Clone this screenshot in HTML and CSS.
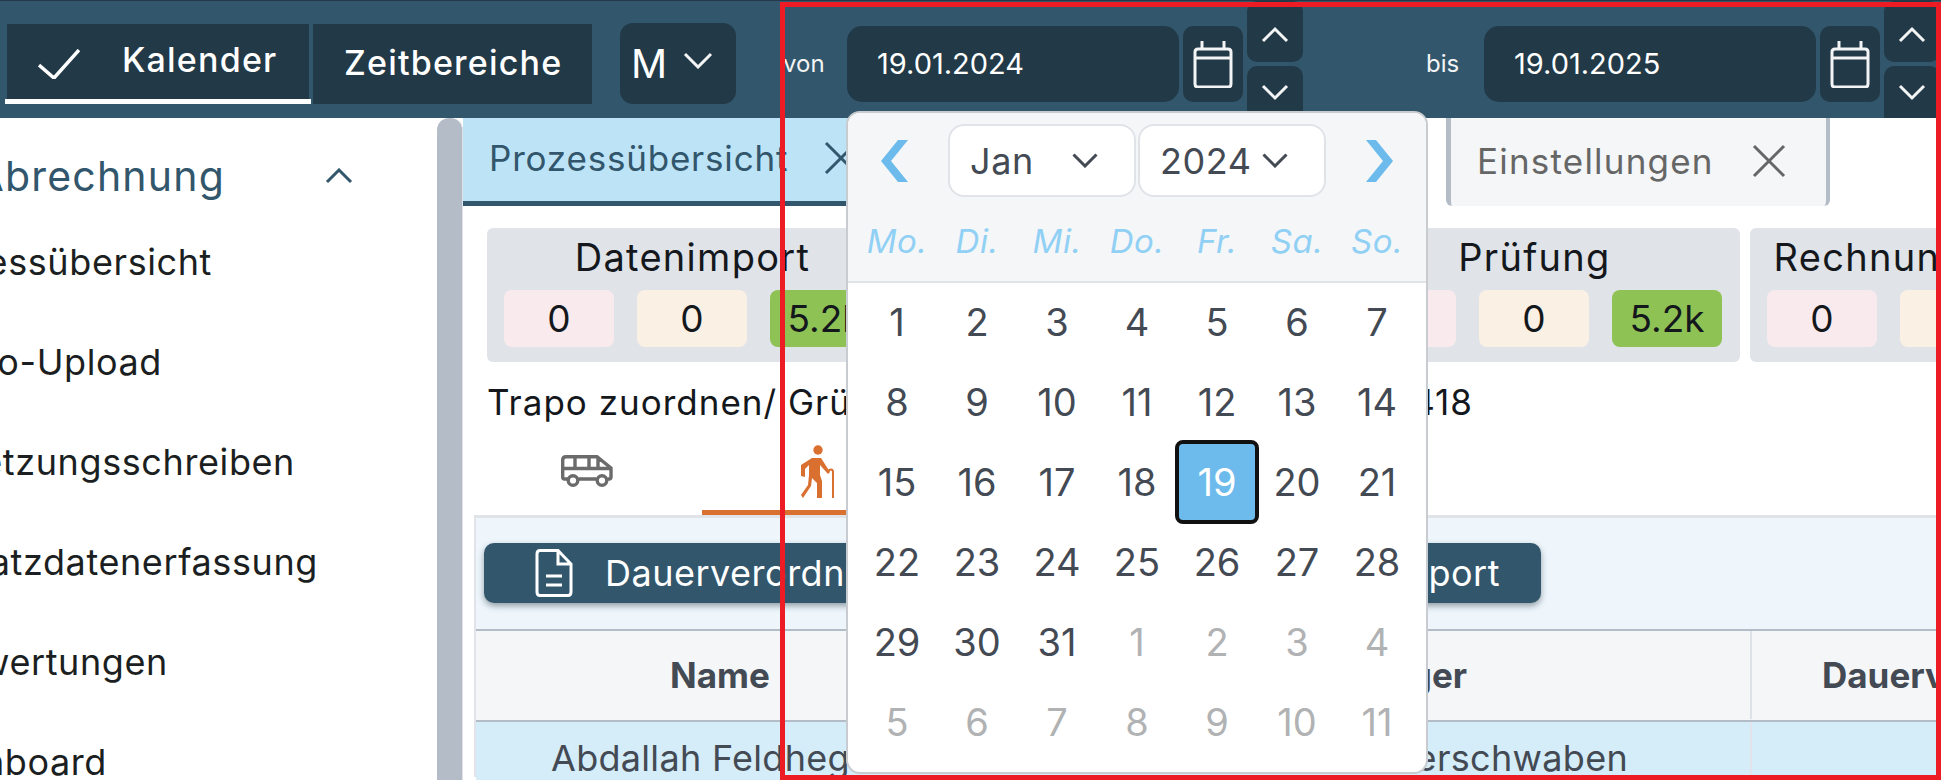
FILE: index.html
```html
<!DOCTYPE html>
<html lang="de">
<head>
  <meta charset="UTF-8" />
  <title>Abrechnung - Prozessübersicht</title>
  <link rel="stylesheet" href="styles.css">
</head>
<body>
  <header class="topbar">
    <div class="mode-tab active">
      <svg class="check" viewBox="0 0 42 30"><path d="M1 16 L16 29 L41 1"/></svg>
      <span>Kalender</span>
    </div>
    <div class="mode-tab second"><span>Zeitbereiche</span></div>
    <div class="period"><span>M</span>
      <svg class="chev-white" viewBox="0 0 30 17"><path d="M2 2 L15 15 L28 2"/></svg>
    </div>

    <span class="range-label von">von</span>
    <div class="date-input">19.01.2024</div>
    <div class="cal-btn">
      <svg viewBox="0 0 42 48"><path d="M3 12 Q3 9 6 9 H36 Q39 9 39 12 V44 Q39 47 36 47 H6 Q3 47 3 44 Z M3 18 H39 M10 1 V9 M32 1 V9"/></svg>
    </div>
    <div class="spin">
      <div class="spin-btn up"><svg viewBox="0 0 28 17"><path d="M2 15 L14 3 L26 15"/></svg></div>
      <div class="spin-btn down"><svg viewBox="0 0 28 17"><path d="M2 2 L14 14 L26 2"/></svg></div>
    </div>

    <span class="range-label bis">bis</span>
    <div class="date-input">19.01.2025</div>
    <div class="cal-btn">
      <svg viewBox="0 0 42 48"><path d="M3 12 Q3 9 6 9 H36 Q39 9 39 12 V44 Q39 47 36 47 H6 Q3 47 3 44 Z M3 18 H39 M10 1 V9 M32 1 V9"/></svg>
    </div>
    <div class="spin">
      <div class="spin-btn up"><svg viewBox="0 0 28 17"><path d="M2 15 L14 3 L26 15"/></svg></div>
      <div class="spin-btn down"><svg viewBox="0 0 28 17"><path d="M2 2 L14 14 L26 2"/></svg></div>
    </div>
  </header>

  <div class="layout">
    <aside class="sidebar">
      <div class="nav-group">
        <span>Abrechnung</span>
      </div>
      <svg class="group-chev" viewBox="0 0 28 16"><path d="M2 14 L14 2 L26 14"/></svg>
      <ul class="nav-list">
        <li class="nav1"><span>Prozessübersicht</span></li>
        <li class="nav2"><span>Trapo-Upload</span></li>
        <li class="nav3"><span>Fortsetzungsschreiben</span></li>
        <li class="nav4"><span>Einsatzdatenerfassung</span></li>
        <li class="nav5"><span>Auswertungen</span></li>
        <li class="nav6"><span>Dashboard</span></li>
      </ul>
    </aside>
    <div class="scrollbar"></div>

    <main class="content">
      <div class="tabs">
        <div class="tab current">
          <span>Prozessübersicht</span>
          <svg class="tab-x" viewBox="0 0 34 34"><path d="M2 2 L32 32 M32 2 L2 32"/></svg>
        </div>
        <div class="tab settings">
          <span>Einstellungen</span>
          <svg class="tab-x" viewBox="0 0 34 34"><path d="M2 2 L32 32 M32 2 L2 32"/></svg>
        </div>
      </div>

      <section class="stats">
        <div class="stat-card">
          <h3>Datenimport</h3>
          <div class="pills"><span class="pill red">0</span><span class="pill beige">0</span><span class="pill green">5.2k</span></div>
        </div>
        <div class="stat-card">
          <h3>Zuordnung</h3>
          <div class="pills"><span class="pill red">0</span><span class="pill beige">0</span><span class="pill green">5.2k</span></div>
        </div>
        <div class="stat-card">
          <h3>Prüfung</h3>
          <div class="pills"><span class="pill red">0</span><span class="pill beige">0</span><span class="pill green">5.2k</span></div>
        </div>
        <div class="stat-card">
          <h3>Rechnungsstellung</h3>
          <div class="pills"><span class="pill red">0</span><span class="pill beige">0</span><span class="pill green">5.2k</span></div>
        </div>
      </section>

      <div class="summary">
        <span>Trapo zuordnen/ Grün</span>
        <span>418</span>
      </div>

      <div class="kind-tabs">
        <div class="kind-tab">
          <svg class="van" viewBox="0 0 52 32">
            <path d="M7 24 H3.500 Q1.700 24 1.700 22 V5 Q1.700 1.700 5 1.700 H36 L50 13 V22 Q50 24 48 24 H46.500 M17.500 24 H35.500 M2 13.500 H49 M14 2 V13.500 M28 2 V13.500 M37 3 V13.500"/>
            <circle cx="12" cy="25.500" r="4.800"/>
            <circle cx="41" cy="25.500" r="4.800"/>
          </svg>
        </div>
        <div class="kind-tab selected">
          <svg class="walker" viewBox="0 0 34 53">
            <circle cx="18" cy="5" r="4.700"/>
            <path class="body" d="M12 13 H21 L30 27 L28 29 L20 20 L20 30 L22 36 V53 H17 V38 L12 33 L11 41 L3 53 L1 50 L8 40 L9 30 V20 L5 24 V32 L1 31 V20 Z"/>
            <path class="cane" d="M28 27 Q29 24.500 31 24.500 Q33 24.500 33 27 V53"/>
          </svg>
        </div>
      </div>

      <section class="panel">
        <div class="toolbar">
          <div class="export-btn">
            <svg viewBox="0 0 38 48"><path d="M5 1.500 H23 L36 15 V43 Q36 46.500 33 46.500 H5 Q2 46.500 2 43 V5 Q2 1.500 5 1.500 Z M23 1.500 V15 H36 M11 27 H27 M11 36 H27"/></svg>
            <div class="export-label"><span>Dauerverordnungen</span><span>Excel-Export</span></div>
          </div>
        </div>
        <div class="table-head">
          <div class="col-name">Name</div>
          <div class="col-owner">Kostenträger</div>
          <div class="col-term">Dauerverordnung</div>
        </div>
        <div class="table-row">
          <div class="col-name">Abdallah Feldhege</div>
          <div class="col-owner">Bezirk Oberschwaben</div>
          <div class="col-term"></div>
        </div>
      </section>
    </main>
  </div>

  <div class="picker">
    <div class="picker-head">
      <div class="month-row">
        <svg class="nav-arrow" viewBox="0 0 27 42"><path d="M27 0 L17 0 L0 21 L17 42 L27 42 L10 21 Z"/></svg>
        <div class="selects">
          <div class="select"><span>Jan</span>
            <svg viewBox="0 0 26 15"><path d="M1.500 1.500 L13 13 L24.500 1.500"/></svg>
          </div>
          <div class="select"><span>2024</span>
            <svg viewBox="0 0 26 15"><path d="M1.500 1.500 L13 13 L24.500 1.500"/></svg>
          </div>
        </div>
        <svg class="nav-arrow" viewBox="0 0 27 42"><path d="M0 0 L10 0 L27 21 L10 42 L0 42 L17 21 Z"/></svg>
      </div>
      <div class="weekdays">
        <span>Mo.</span><span>Di.</span><span>Mi.</span><span>Do.</span><span>Fr.</span><span>Sa.</span><span>So.</span>
      </div>
    </div>
    <div class="days">
      <span>1</span><span>2</span><span>3</span><span>4</span><span>5</span><span>6</span><span>7</span>
      <span>8</span><span>9</span><span>10</span><span>11</span><span>12</span><span>13</span><span>14</span>
      <span>15</span><span>16</span><span>17</span><span>18</span><span class="today">19</span><span>20</span><span>21</span>
      <span>22</span><span>23</span><span>24</span><span>25</span><span>26</span><span>27</span><span>28</span>
      <span>29</span><span>30</span><span>31</span><span class="off">1</span><span class="off">2</span><span class="off">3</span><span class="off">4</span>
      <span class="off">5</span><span class="off">6</span><span class="off">7</span><span class="off">8</span><span class="off">9</span><span class="off">10</span><span class="off">11</span>
    </div>
  </div>

  <div class="frame"></div>
</body>
</html>
```

FILE: styles.css
```css
* {
  box-sizing: border-box;
}
body {
  margin: 0;
  width: 1941px;
  height: 780px;
  overflow: hidden;
  position: relative;
  background: white;
  color: #14181c;
  font-family: Inter, "Open Sans", sans-serif;
}
svg {
  display: block;
  fill: none;
}

/* top bar */
.topbar {
  height: 118px;
  background: #32566b;
  border-top: 1px solid #243a48;
  display: flex;
  align-items: flex-start;
  overflow: hidden;
}
.mode-tab {
  height: 80px;
  margin-top: 23px;
  background: #223947;
  color: white;
  font-size: 34px;
  font-weight: 500;
  letter-spacing: 1.200px;
  display: flex;
  align-items: center;
  position: relative;
}
.mode-tab.active {
  width: 302px;
  margin-left: 7px;
  padding: 0 0 10px 31px;
}
.mode-tab.active::after {
  content: "";
  position: absolute;
  left: -2px;
  right: -2px;
  bottom: 0;
  height: 5px;
  background: white;
}
.mode-tab.second {
  width: 279px;
  margin-left: 4px;
  padding-left: 31px;
  padding-bottom: 4px;
}
.check {
  width: 42px;
  height: 30px;
  margin-right: 42px;
  margin-top: 10px;
}
.check path {
  stroke: white;
  stroke-width: 3.500;
}
.period {
  width: 116px;
  height: 81px;
  margin: 22px 0 0 28px;
  padding: 0 23px 0 11px;
  background: #223947;
  border-radius: 13px;
  color: white;
  font-size: 40px;
  display: flex;
  align-items: center;
  justify-content: space-between;
}
.chev-white {
  width: 30px;
  height: 17px;
  margin-bottom: 6px;
}
.chev-white path, .spin-btn path, .cal-btn path {
  stroke: #f2f4f5;
  stroke-width: 3;
}
.range-label {
  color: #f2f4f5;
  font-size: 24px;
  line-height: 76px;
  margin-top: 25px;
}
.von {
  width: 64px;
  margin-left: 47px;
}
.bis {
  width: 58px;
  margin-left: 123px;
}
.date-input {
  width: 332px;
  height: 76px;
  margin-top: 25px;
  padding: 0 0 0 30px;
  background: #223947;
  border-radius: 15px;
  color: white;
  font-size: 29px;
  line-height: 75px;
}
.cal-btn {
  width: 60px;
  height: 76px;
  margin: 25px 4px 0;
  background: #223947;
  border-radius: 10px;
  padding: 14px 0 0 9px;
}
.cal-btn svg {
  width: 42px;
  height: 48px;
}
.spin {
  width: 56px;
  flex-shrink: 0;
  display: flex;
  flex-direction: column;
  gap: 4px;
}
.spin-btn {
  background: #223947;
  height: 61px;
  border-radius: 10px;
  display: flex;
  justify-content: center;
  padding-top: 25px;
}
.spin-btn.down {
  height: 60px;
  padding-top: 18px;
}
.spin-btn svg {
  width: 28px;
  height: 17px;
}

/* main layout */
.layout {
  display: flex;
  height: 662px;
  overflow: hidden;
}
.sidebar {
  width: 437px;
  flex-shrink: 0;
  position: relative;
  overflow: hidden;
}
.nav-group {
  width: 225px;
  height: 50px;
  margin-top: 33px;
  display: flex;
  justify-content: flex-end;
  color: #32566b;
  font-size: 41px;
  letter-spacing: 1.200px;
  line-height: 50px;
  white-space: nowrap;
}
.group-chev {
  position: absolute;
  left: 325px;
  top: 50px;
  width: 28px;
  height: 16px;
}
.group-chev path {
  stroke: #32566b;
  stroke-width: 3;
}
.nav-list {
  list-style: none;
  margin: 36px 0 0;
  padding: 0;
  font-size: 36px;
  letter-spacing: 0.600px;
  white-space: nowrap;
  color: #1c1f22;
}
.nav-list li {
  height: 100px;
  display: flex;
  justify-content: flex-end;
  line-height: 50px;
}
.nav1 { width: 212px; }
.nav2 { width: 162px; }
.nav3 { width: 295px; }
.nav4 { width: 318px; }
.nav5 { width: 168px; }
.nav6 { width: 107px; }

.scrollbar {
  width: 26px;
  flex-shrink: 0;
  background: #b4bdc7;
  border-radius: 12px 12px 0 0;
  border-right: 1px solid #dfe3e7;
}
.content {
  flex: 1;
  min-width: 0;
  overflow: hidden;
}

/* tabs */
.tabs {
  height: 88px;
  display: flex;
}
.tab {
  display: flex;
  align-items: center;
  font-size: 35px;
  letter-spacing: 0.800px;
  white-space: nowrap;
  padding-bottom: 3px;
}
.tab.current {
  width: 410px;
  background: #bde3f7;
  border-bottom: 5px solid #32566b;
  color: #32566b;
  padding-left: 26px;
}
.tab.current .tab-x {
  margin-left: 36px;
}
.tab-x {
  width: 34px;
  height: 34px;
  flex-shrink: 0;
}
.tab-x path {
  stroke: currentColor;
  stroke-width: 3;
}
.tab.settings {
  width: 384px;
  margin-left: 573px;
  background: #f4f6f8;
  color: #666;
  border-left: 5px solid #b4bdc7;
  border-right: 4px solid #b4bdc7;
  border-radius: 0 0 6px 6px;
  padding-left: 26px;
  letter-spacing: 1.200px;
}
.tab.settings .tab-x {
  margin-left: 38px;
}

/* status cards */
.stats {
  margin: 22px 0 0 24px;
  display: flex;
  gap: 10px;
}
.stat-card {
  width: 411px;
  height: 134px;
  flex-shrink: 0;
  background: #e0e3e8;
  border-radius: 6px;
  padding: 0 17px;
}
.stat-card h3 {
  margin: 0;
  height: 62px;
  font-size: 38px;
  font-weight: 400;
  letter-spacing: 1.300px;
  line-height: 58px;
  text-align: center;
  white-space: nowrap;
}
.pills {
  display: flex;
  gap: 23px;
}
.pill {
  width: 110px;
  height: 57px;
  border-radius: 8px;
  font-size: 37px;
  line-height: 57px;
  text-align: center;
}
.pill.red { background: #f9ebed; }
.pill.beige { background: #faf0e4; }
.pill.green { background: #8fc255; }

.summary {
  width: 986px;
  margin: 17px 0 17px 24px;
  height: 46px;
  font-size: 35px;
  letter-spacing: 1px;
  line-height: 46px;
  display: flex;
  justify-content: space-between;
  white-space: nowrap;
}

/* van and walker tabs */
.kind-tabs {
  height: 73px;
  margin: 0 0 0 9px;
  display: flex;
}
.kind-tab {
  width: 230px;
  display: flex;
  justify-content: center;
}
.kind-tab.selected {
  border-bottom: 5px solid #d9702f;
}
.van {
  width: 52px;
  height: 32px;
  margin-top: 13px;
}
.van path, .van circle {
  stroke: #6b6b6b;
  stroke-width: 3.400;
}
.van circle {
  fill: white;
}
.walker {
  width: 34px;
  height: 53px;
  margin-top: 3px;
}
.walker circle, .walker .body {
  fill: #d9702f;
}
.walker .cane {
  stroke: #d9702f;
  stroke-width: 2;
}

/* table panel */
.panel {
  margin-left: 11px;
  width: 1500px;
  height: 262px;
  background: #eef6fc;
  border-top: 3px solid #e0e3e8;
  border-left: 2px solid #e0e3e8;
}
.toolbar {
  height: 111px;
  padding: 25px 0 0 8px;
}
.export-btn {
  width: 1057px;
  height: 60px;
  background: #32566b;
  border-radius: 10px;
  box-shadow: 0 3px 6px rgba(30, 50, 60, 0.45);
  color: white;
  font-size: 36px;
  letter-spacing: 0.500px;
  display: flex;
  align-items: center;
  padding: 0 41px 0 51px;
  white-space: nowrap;
}
.export-btn svg {
  width: 38px;
  height: 48px;
  margin-right: 32px;
}
.export-btn path {
  stroke: white;
  stroke-width: 3;
}
.export-label {
  flex: 1;
  display: flex;
  justify-content: space-between;
}
.table-head, .table-row {
  display: grid;
  grid-template-columns: 488px 786px 1fr;
  white-space: nowrap;
}
.table-head {
  height: 93px;
  background: #f4f6f8;
  border-top: 2px solid #b4bdc7;
  border-bottom: 2px solid #b4bdc7;
  color: #434a54;
  font-size: 35px;
  font-weight: 700;
  line-height: 88px;
}
.table-head .col-name {
  text-align: center;
}
.table-head .col-owner {
  text-align: right;
  padding-right: 283px;
}
.table-head .col-term {
  padding-left: 70px;
  border-left: 2px solid #dde2e8;
  margin-bottom: 4px;
}
.table-row {
  height: 70px;
  background: #d5ecf9;
  color: #434a54;
  font-size: 36px;
  letter-spacing: 0.300px;
  line-height: 72px;
}
.table-row .col-name {
  padding-left: 75px;
}
.table-row .col-owner {
  text-align: right;
  padding-right: 122px;
}
.table-row .col-term {
  border-left: 2px solid #e3e3ec;
}

/* date picker */
.picker {
  position: absolute;
  left: 846px;
  top: 111px;
  width: 582px;
  height: 663px;
  background: white;
  border: 2px solid #c8cbcf;
  border-radius: 14px;
  overflow: hidden;
}
.picker-head {
  height: 170px;
  background: #f4f6f8;
  border-bottom: 2px solid #e0e3e8;
  padding-top: 11px;
}
.month-row {
  display: flex;
  align-items: center;
  justify-content: center;
  gap: 40px;
}
.nav-arrow {
  width: 27px;
  height: 42px;
  fill: #6dbbec;
}
.selects {
  display: flex;
  gap: 2px;
}
.select {
  width: 188px;
  height: 73px;
  background: white;
  border: 2px solid #e0e3e8;
  border-radius: 16px;
  color: #434a54;
  font-size: 36px;
  letter-spacing: 0.600px;
  display: flex;
  align-items: center;
  justify-content: space-between;
  padding: 0 36px 0 20px;
}
.select svg {
  width: 26px;
  height: 15px;
}
.select path {
  stroke: #434a54;
  stroke-width: 3;
}
.weekdays {
  display: grid;
  grid-template-columns: repeat(7, 80px);
  margin: 24px 0 0 9px;
  color: #90d0f4;
  font-size: 33px;
  letter-spacing: 0.500px;
  font-style: italic;
  text-align: center;
}
.days {
  display: grid;
  grid-template-columns: repeat(7, 80px);
  grid-auto-rows: 80px;
  margin: -1px 0 0 9px;
  color: #434a54;
  font-size: 38px;
  text-align: center;
}
.days span {
  display: flex;
  align-items: center;
  justify-content: center;
}
.days .off {
  color: #b0b2b4;
}
.days .today {
  margin: -2px;
  background: #6dbbec;
  border: 4px solid #111;
  border-radius: 8px;
  color: white;
}

/* red marker round the picker region */
.frame {
  position: absolute;
  left: 780px;
  top: 2px;
  right: 0;
  bottom: 0;
  border: 5px solid #ed1c24;
  pointer-events: none;
}
```
